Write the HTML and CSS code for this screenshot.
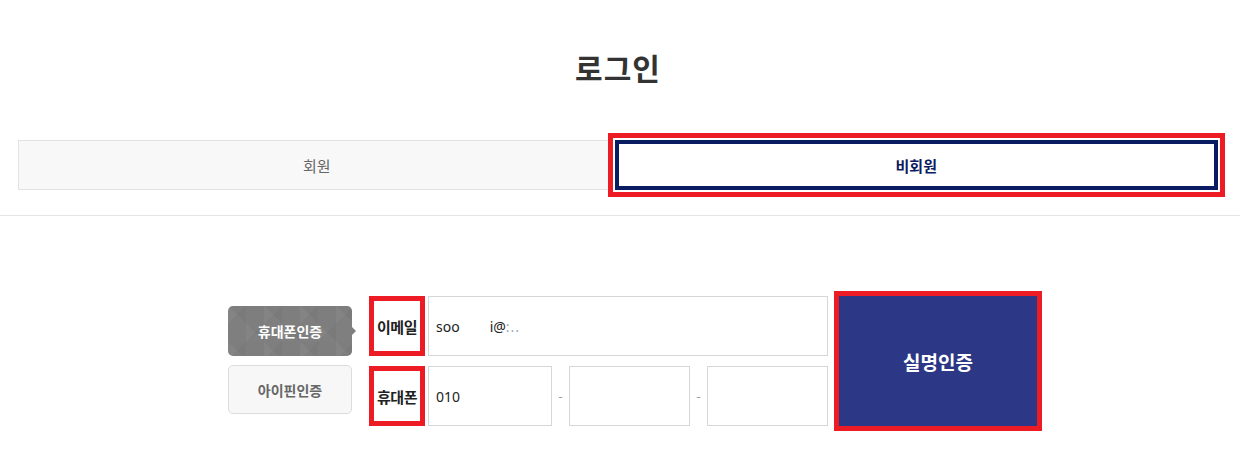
FILE: index.html
```html
<!DOCTYPE html>
<html lang="ko">
<head>
<meta charset="utf-8">
<title>로그인</title>
<link rel="stylesheet" href="styles.css">
</head>
<body>
<div class="page">
  <h1 class="title">로그인</h1>
  <div class="tabs">
    <div class="tab">회원</div>
    <div class="tab tab-active">비회원</div>
  </div>
</div>
<hr class="divider">
<div class="auth">
  <div class="methods">
    <div class="method method-on">휴대폰인증</div>
    <div class="method method-off">아이핀인증</div>
  </div>
  <div class="fields">
    <div class="label">이메일</div>
    <div class="input input-wide"><span>soo</span><span class="mask">i@</span><span class="faint">:..</span></div>
    <div class="label">휴대폰</div>
    <div class="phone">
      <div class="input input-p1">010</div>
      <span class="dash">-</span>
      <div class="input input-p2"></div>
      <span class="dash">-</span>
      <div class="input input-p2"></div>
    </div>
  </div>
  <div class="submit">실명인증</div>
</div>
</body>
</html>
```
FILE: styles.css
```css
html, body {
  margin: 0;
  padding: 0;
  background: #fff;
}
body {
  font-family: "Noto Sans CJK KR", "Noto Sans", sans-serif;
  color: #333;
  width: 1240px;
  min-height: 476px;
}
.page {
  padding-left: 18px;
  width: 1200px;
}
.title {
  margin: 0;
  padding-top: 47px;
  height: 40px;
  line-height: 40px;
  font-size: 30px;
  font-weight: 700;
  color: #333;
  text-align: center;
  letter-spacing: 1px;
}
.tabs {
  display: flex;
  margin-top: 53px;
  height: 50px;
}
.tab {
  flex: 1;
  box-sizing: border-box;
  height: 50px;
  display: flex;
  align-items: center;
  justify-content: center;
  background: #f8f8f8;
  border: 1px solid #e2e2e2;
  border-right: none;
  font-size: 15px;
  color: #666;
}
.tab-active {
  background: #fff;
  border: 4px solid #0b1b62;
  color: #0b1b62;
  font-weight: 700;
  box-shadow: 0 0 0 2px #fff, 0 0 0 7px #ed1c24;
}
.divider {
  margin: 25px 0 0 0;
  border: none;
  border-top: 1px solid #e6e6e6;
  height: 0;
}
.auth {
  display: flex;
  align-items: flex-start;
  margin-left: 228px;
  margin-top: 80px;
}
.methods {
  width: 124px;
  padding-top: 10px;
  display: flex;
  flex-direction: column;
  gap: 9px;
}
.method {
  box-sizing: border-box;
  border-radius: 5px;
  display: flex;
  align-items: center;
  justify-content: center;
  font-size: 14px;
  font-weight: 700;
}
.method-on {
  position: relative;
  height: 50px;
  color: #fff;
  background-color: #7e7e7e;
  background-image:
    linear-gradient(45deg, rgba(255,255,255,0.025) 50%, rgba(0,0,0,0.02) 50%),
    linear-gradient(-45deg, rgba(0,0,0,0.02) 50%, rgba(255,255,255,0.02) 50%);
  background-size: 36px 36px, 36px 36px;
  background-position: 0 0, 18px 0;
}
.method-on::after {
  content: "";
  position: absolute;
  right: -4px;
  top: 21px;
  border-top: 4px solid transparent;
  border-bottom: 4px solid transparent;
  border-left: 4px solid #7e7e7e;
}
.method-off {
  height: 49px;
  background: #f7f7f7;
  border: 1px solid #dcdcdc;
  color: #666;
}
.fields {
  margin-left: 17px;
  display: grid;
  grid-template-columns: 56px 400px;
  column-gap: 3px;
  row-gap: 10px;
}
.label {
  box-sizing: border-box;
  height: 60px;
  border: 5px solid #ed1c24;
  display: flex;
  align-items: center;
  justify-content: center;
  font-size: 15px;
  font-weight: 700;
  color: #222;
  letter-spacing: -0.5px;
}
.input {
  box-sizing: border-box;
  height: 60px;
  border: 1px solid #d6d6d6;
  background: #fff;
  display: flex;
  align-items: center;
  padding-left: 7px;
  font-size: 14px;
  color: #222;
  font-family: "Noto Sans", "Noto Sans CJK KR", sans-serif;
}
.input-wide {
  width: 400px;
}
.mask {
  margin-left: 30px;
}
.faint {
  color: #9aa7b5;
  letter-spacing: 1px;
}
.phone {
  display: flex;
  align-items: center;
  width: 400px;
}
.input-p1 {
  width: 124px;
}
.input-p2 {
  width: 121px;
}
.dash {
  width: 17px;
  text-align: center;
  color: #999;
  font-size: 13px;
}
.submit {
  margin-left: 6px;
  margin-top: -5px;
  width: 198px;
  height: 130px;
  background: #2c3785;
  border: 5px solid #ed1c24;
  display: flex;
  align-items: center;
  justify-content: center;
  color: #fff;
  font-size: 19px;
  font-weight: 700;
}
```
